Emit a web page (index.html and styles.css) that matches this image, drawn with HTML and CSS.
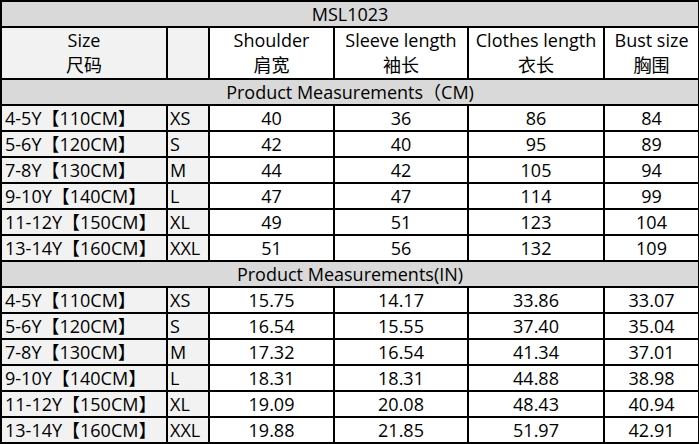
FILE: index.html
```html
<!DOCTYPE html>
<html>
<head>
<meta charset="utf-8">
<link rel="stylesheet" href="styles.css">
</head>
<body>
<table class="chart">
  <colgroup>
    <col class="c1"><col class="c2"><col class="c3"><col class="c4"><col class="c5"><col class="c6">
  </colgroup>
  <tr class="title"><td colspan="6">MSL1023</td></tr>
  <tr class="head">
    <td class="lite">Size<br>尺码</td>
    <td class="lite"></td>
    <td>Shoulder<br>肩宽</td>
    <td>Sleeve length<br>袖长</td>
    <td>Clothes length<br>衣长</td>
    <td>Bust size<br>胸围</td>
  </tr>
  <tr class="section"><td colspan="6">Product Measurements（CM)</td></tr>
  <tr><td class="lbl">4-5Y【110CM】</td><td class="sz">XS</td><td>40</td><td>36</td><td>86</td><td>84</td></tr>
  <tr><td class="lbl">5-6Y【120CM】</td><td class="sz">S</td><td>42</td><td>40</td><td>95</td><td>89</td></tr>
  <tr><td class="lbl">7-8Y【130CM】</td><td class="sz">M</td><td>44</td><td>42</td><td>105</td><td>94</td></tr>
  <tr><td class="lbl">9-10Y【140CM】</td><td class="sz">L</td><td>47</td><td>47</td><td>114</td><td>99</td></tr>
  <tr><td class="lbl">11-12Y【150CM】</td><td class="sz">XL</td><td>49</td><td>51</td><td>123</td><td>104</td></tr>
  <tr><td class="lbl">13-14Y【160CM】</td><td class="sz">XXL</td><td>51</td><td>56</td><td>132</td><td>109</td></tr>
  <tr class="section"><td colspan="6">Product Measurements(IN)</td></tr>
  <tr><td class="lbl">4-5Y【110CM】</td><td class="sz">XS</td><td>15.75</td><td>14.17</td><td>33.86</td><td>33.07</td></tr>
  <tr><td class="lbl">5-6Y【120CM】</td><td class="sz">S</td><td>16.54</td><td>15.55</td><td>37.40</td><td>35.04</td></tr>
  <tr><td class="lbl">7-8Y【130CM】</td><td class="sz">M</td><td>17.32</td><td>16.54</td><td>41.34</td><td>37.01</td></tr>
  <tr><td class="lbl">9-10Y【140CM】</td><td class="sz">L</td><td>18.31</td><td>18.31</td><td>44.88</td><td>38.98</td></tr>
  <tr><td class="lbl">11-12Y【150CM】</td><td class="sz">XL</td><td>19.09</td><td>20.08</td><td>48.43</td><td>40.94</td></tr>
  <tr><td class="lbl">13-14Y【160CM】</td><td class="sz">XXL</td><td>19.88</td><td>21.85</td><td>51.97</td><td>42.91</td></tr>
</table>
</body>
</html>
```
FILE: styles.css
```css
html, body {
  margin: 0;
  padding: 0;
  background: #ffffff;
}
.chart {
  border-collapse: collapse;
  table-layout: fixed;
  width: 698px;
  font-family: "Open Sans", "Noto Sans CJK SC", sans-serif;
  font-size: 18px;
  color: #000000;
}
.c1 { width: 166px; }
.c2 { width: 42px; }
.c3 { width: 125px; }
.c4 { width: 134px; }
.c5 { width: 136px; }
.c6 { width: 95px; }
.chart td {
  border: 2px solid #000000;
  height: 24px;
  padding: 0;
  line-height: 24px;
  text-align: center;
  white-space: nowrap;
  overflow: hidden;
  background: #ffffff;
}
.title td, .section td {
  background: #d9d9d9;
}
.head td {
  height: 50px;
  line-height: 25px;
}
.chart td.lite {
  background: #f2f2f2;
}
.chart td.lbl {
  background: #f2f2f2;
  text-align: left;
  padding-left: 3px;
}
.chart td.sz {
  background: #f2f2f2;
  text-align: left;
  padding-left: 2px;
}
```
